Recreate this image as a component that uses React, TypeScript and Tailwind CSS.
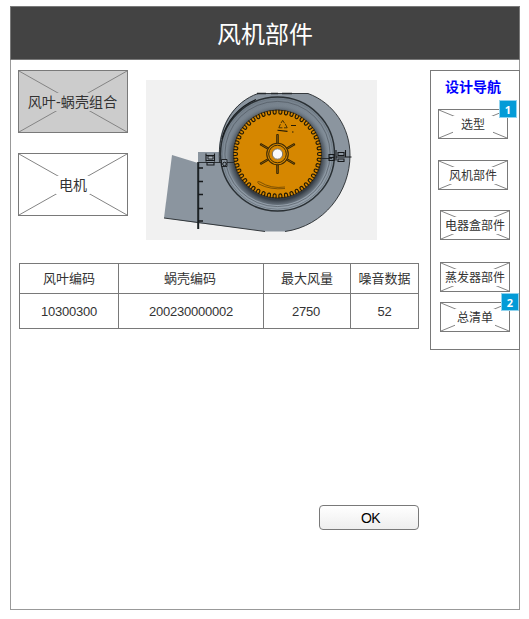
import type { ReactNode } from 'react';

type PlaceholderProps = {
  label: string;
  className: string;
  labelClass: string;
};

/** Wireframe box: crossed diagonals with a label laid over the middle. */
function Placeholder({ label, className, labelClass }: PlaceholderProps) {
  return (
    <button
      className={`relative flex shrink-0 items-center justify-center border border-[#797979] text-[#333333] ${className}`}
    >
      <svg className="absolute inset-0 size-full" preserveAspectRatio="none" viewBox="0 0 100 100">
        <path
          d="M0 0L100 100M0 100L100 0"
          stroke="#848484"
          strokeWidth="1"
          vectorEffect="non-scaling-stroke"
        />
      </svg>
      <span className={`relative flex items-center justify-center pt-[2px] whitespace-nowrap ${labelClass}`}>{label}</span>
    </button>
  );
}

function NavItem({ label, className, badge, badgeClass }: { label: string; className: string; badge?: string; badgeClass?: string }) {
  return (
    <div className={`relative ${className}`}>
      <Placeholder label={label} className="h-[30px] w-[70px] bg-white" labelClass="h-[17px] min-w-10 bg-white text-[12px]" />
      {badge && (
        <span
          className={`absolute flex h-[18px] w-[18px] items-center justify-center border border-[#8fd3ef] bg-[#039bd7] font-['Open_Sans',sans-serif] text-[11px] leading-none font-bold text-white ${badgeClass}`}
        >
          {badge}
        </span>
      )}
    </div>
  );
}

const TEETH = Array.from({ length: 46 }, (_, i) => (i + 0.5) * (360 / 46));
const SPOKES = [0, 60, 120, 180, 240, 300];

function Fan() {
  return (
    <svg className="mt-[10px] block h-[160px] w-[231px] shrink-0 bg-[#f1f1f1]" viewBox="146 80 231 160" fill="none">
      <defs>
        <linearGradient id="rim" gradientUnits="userSpaceOnUse" x1="262" y1="98" x2="290" y2="212">
          <stop offset="0" stopColor="#75808b" />
          <stop offset="0.5" stopColor="#84909b" />
          <stop offset="1" stopColor="#96a1ac" />
        </linearGradient>
        <radialGradient id="throat" gradientUnits="userSpaceOnUse" cx="277.5" cy="157" r="56">
          <stop offset="0.77" stopColor="#343b43" />
          <stop offset="0.85" stopColor="#59636d" stopOpacity="0.8" />
          <stop offset="0.95" stopColor="#84909b" stopOpacity="0" />
        </radialGradient>
      </defs>
      <path d="M172 155L198 163V223L164 218Z" fill="#8b959f" />
      <path
        d="M198 152H219C219 124 234 102 258 93.5H308C334 103 350 128 350 155C350 192 324 226 285 231.5H265L198 223Z"
        fill="#8b959f"
      />
      <path
        d="M219.5 163C217 126 234 102 258 93.5H308C334 103 350 128 350 155C350 192 324 226 285 231.5M265 231.5L198 222.5L164 218"
        stroke="#25292c"
        strokeWidth="0.9"
      />
      <path d="M257 93.5h9M271 93.5h7M282 93.5h10" stroke="#24282b" strokeWidth="1.3" />
      <circle cx="277.5" cy="154" r="57" fill="url(#rim)" stroke="#2a3034" strokeWidth="1.5" />
      <circle cx="277.5" cy="154" r="55.2" stroke="#6b7680" strokeWidth="0.8" />
      <circle cx="277.5" cy="154" r="52.6" stroke="#4a535b" strokeWidth="0.6" />
      <circle cx="277.5" cy="154" r="51" fill="url(#throat)" />
      <path d="M222 139A58 58 0 0 1 256 99.5" stroke="#171b1e" strokeWidth="1.2" />
      <circle cx="277.5" cy="154" r="44" fill="#d68700" stroke="#33291a" strokeWidth="0.8" />
      {TEETH.map((a) => (
        <path
          key={a}
          d="M276 109.8v2.6a1.5 1.6 0 0 0 3 0v-2.6"
          stroke="#1c1706"
          strokeWidth="1.1"
          transform={`rotate(${a} 277.5 154)`}
        />
      ))}
      {SPOKES.map((a) => (
        <g key={a} transform={`rotate(${a} 277.5 154)`}>
          <path d="M276.7 143v-8.5h1.6v8.5" stroke="#2f2206" strokeWidth="0.9" fill="#9b6505" />
        </g>
      ))}
      <circle cx="277.5" cy="154" r="10.8" stroke="#3d2b06" strokeWidth="1.1" />
      <circle cx="277.5" cy="154" r="8.8" stroke="#3d2b06" strokeWidth="1" />
      <circle cx="277.5" cy="154" r="5.2" fill="#fafafa" stroke="#7d7464" strokeWidth="1" />
      <path d="M281 123l1.7-2.6 1.8 2.8M280.4 124.2l-1.6 3.6h3.6M284 127.8h3.2l-2-4" stroke="#3d2b06" strokeWidth="0.9" />
      <path d="M277.5 130.2l10 1.2M291 125.5h5M292 132h1.5" stroke="#251c06" strokeWidth="1.1" />
      <path d="M285 188.5Q270 190 259 184Q256 180.5 260 182Q271 189 285 187" stroke="#5a3b05" strokeWidth="0.7" />
      <path d="M198.2 162v67" stroke="#1c2225" strokeWidth="2" />
      <path d="M198 168h5M198 181.5h5M198 194.5h5M198 208.5h5M198 221h5" stroke="#16191b" strokeWidth="1.4" />
      <path d="M198 162.5h36M322 158.5h10" stroke="#24282b" strokeWidth="0.9" />
      <path d="M206 153.5v8M214.5 153.5v8M206 155.5h9M206 160.5h9M207 165h7v-2.5h-7z" stroke="#16191b" strokeWidth="1.1" />
      <path d="M208 156h5v3h-5z" fill="#a7b0b8" stroke="#16191b" strokeWidth="0.9" />
      <path d="M221.5 159.5h5.5v7h-5.5z" fill="#8b959f" stroke="#16191b" strokeWidth="0.9" />
      <circle cx="224.5" cy="164" r="1.8" stroke="#16191b" />
      <path d="M329 154.5h5v6h-5zM329 157.5h5M336 150v10.5M345.5 150v7M336 157h15.5M338 152.5h6v3h-6zM338 159h6v2.5h-6z" stroke="#16191b" strokeWidth="1.1" />
    </svg>
  );
}

function Cell({ children, className }: { children: ReactNode; className?: string }) {
  return <td className={`border border-[#797979] p-0 text-center align-middle ${className ?? ''}`}>{children}</td>;
}

export default function App() {
  return (
    <div className="h-[619px] w-[529px] overflow-hidden bg-white pt-[6px] pl-[10px] font-['Liberation_Sans','Noto_Sans_CJK_SC',sans-serif] text-[#333333]">
      <div className="flex h-[604px] w-[510px] flex-col border border-[#999999]">
        <header className="-mx-px -mt-px flex h-[54px] shrink-0 items-center justify-center border border-[#797979] bg-[#434343] pt-[4px] text-[24px] text-white">
          风机部件
        </header>
        <div className="flex flex-1 pt-[10px] pl-[7px]">
          <main className="flex w-[412px] shrink-0 flex-col">
            <div className="flex gap-[18px]">
              <div className="flex flex-col gap-5">
                <Placeholder label="风叶-蜗壳组合" className="h-[63px] w-[110px] bg-[#cccccc]" labelClass="h-[18px] bg-[#cccccc] text-[14px] tracking-[0.15px] pr-px" />
                <Placeholder label="电机" className="h-[63px] w-[110px] bg-white" labelClass="h-[18px] min-w-[34px] bg-white text-[14px]" />
              </div>
              <Fan />
            </div>
            <table className="mt-[23px] ml-[1px] h-[66px] w-[400px] table-fixed border-collapse text-[13px]">
              <colgroup>
                <col className="w-[99px]" />
                <col className="w-[145px]" />
                <col className="w-[87px]" />
                <col className="w-[68px]" />
              </colgroup>
              <tbody>
                <tr className="h-[30px]">
                  <Cell>风叶编码</Cell>
                  <Cell className="pr-[2px]">蜗壳编码</Cell>
                  <Cell>最大风量</Cell>
                  <Cell>噪音数据</Cell>
                </tr>
                <tr className="h-[35px] tracking-[-0.25px]">
                  <Cell className="pt-[2px]">10300300</Cell>
                  <Cell className="pt-[2px]">200230000002</Cell>
                  <Cell className="pt-[2px] pr-[2px]">2750</Cell>
                  <Cell className="pt-[2px]">52</Cell>
                </tr>
              </tbody>
            </table>
            <button className="mt-[176px] ml-[301px] flex h-[25px] w-[100px] items-center justify-center rounded-[4px] border border-[#797979] bg-linear-to-b from-white to-[#eeeeee] pt-px pl-[3px] text-[14px] tracking-[-0.5px] text-black">
              OK
            </button>
          </main>
          <nav className="-mr-px flex h-[280px] w-[90px] shrink-0 flex-col border border-[#797979] pl-[7px]">
            <h2 className="flex h-[38px] w-[70px] items-center justify-center pb-[6px] text-[14px] font-bold text-[#0000ff]">设计导航</h2>
            <NavItem label="选型" className="w-[70px]" badge="1" badgeClass="-top-[9px] left-[61px]" />
            <NavItem label="风机部件" className="mt-[21px] w-[70px]" />
            <NavItem label="电器盒部件" className="mt-5 ml-[2px] w-[70px]" />
            <NavItem label="蒸发器部件" className="mt-[22px] ml-[2px] w-[70px]" />
            <NavItem label="总清单" className="mt-[10px] ml-[2px] w-[70px]" badge="2" badgeClass="-top-[9px] left-[61px]" />
          </nav>
        </div>
      </div>
    </div>
  );
}
